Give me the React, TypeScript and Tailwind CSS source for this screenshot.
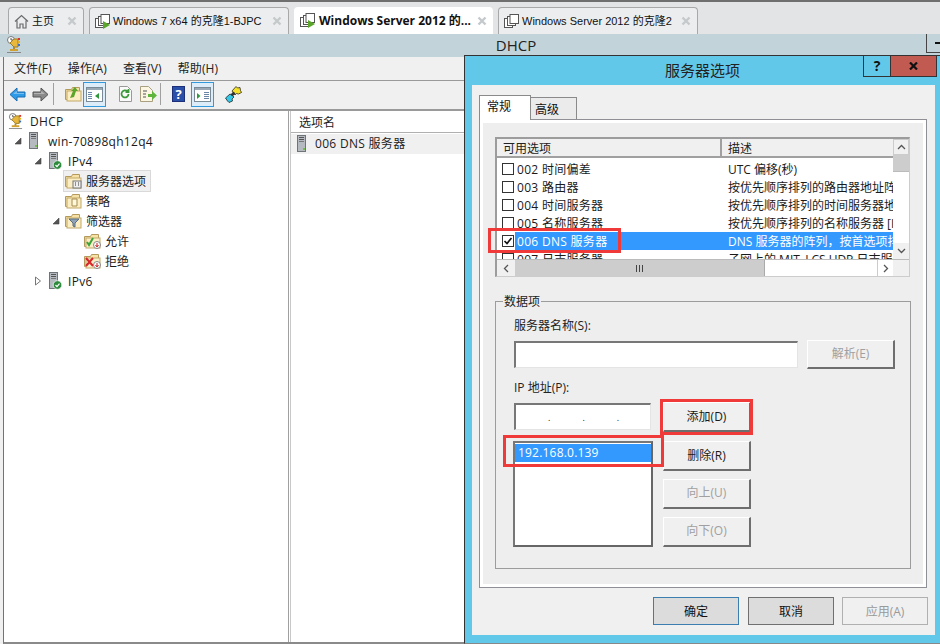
import React from "react";

const F = "font-['Open_Sans','Noto_Sans_CJK_SC',sans-serif]";

function Arrow({ dir, fill, stroke }: { dir: "l" | "r"; fill: string; stroke: string }) {
  return (
    <svg width="17" height="17" viewBox="0 0 17 17" className={dir === "r" ? "scale-x-[-1]" : ""}>
      <path d="M1 8.5 8 2v4h8v5H8v4z" fill={fill} stroke={stroke} strokeWidth="1" />
      <path d="M4 8 8 4.5V7h7v1z" fill="#fff" opacity=".35" />
    </svg>
  );
}

function PaneIcon({ right }: { right?: boolean }) {
  return (
    <div className="w-[23px] h-[25px] border border-[#3399dd] bg-[#dcecf8] flex items-center justify-center">
      <svg width="17" height="15" viewBox="0 0 17 15">
        <rect x=".5" y=".5" width="16" height="14" fill="#fff" stroke="#7a8a96" />
        <rect x="1" y="1" width="15" height="2" fill="#9aa8b4" />
        {right ? (
          <>
            <path d="M3 6v6l3.5-3z" fill="#2f9a3c" />
            <path d="M10 5.5h5M10 7.5h5M10 9.5h5M10 11.5h5" stroke="#6a87a8" />
          </>
        ) : (
          <>
            <path d="M2 5.5h4M2 7.5h4M2 9.5h4M2 11.5h4" stroke="#6a87a8" />
            <path d="M13 6v6l-4-3z" fill="#2f9a3c" />
          </>
        )}
      </svg>
    </div>
  );
}

function Folder({ children }: { children?: React.ReactNode }) {
  return (
    <svg width="18" height="16" viewBox="0 0 18 16" className="shrink-0">
      <path d="M.5 3.5h6l1-2h7v12H.5z" fill="#f6e2a6" stroke="#b49a5c" />
      <rect x="2" y="5" width="14" height="10" fill="#fbeec4" stroke="#c2a868" />
      {children}
    </svg>
  );
}

function Trophy({ size = 16 }: { size?: number }) {
  return (
    <svg width={size} height={size + 2} viewBox="0 0 16 18" className="shrink-0">
      <circle cx="5" cy="4" r="3.5" fill="#fff" stroke="#777" />
      <path d="M5 2v2h2" stroke="#555" fill="none" />
      <path d="M4 7 8 3h4v8H8z" fill="#e8b83c" stroke="#a07c20" />
      <rect x="12" y="2" width="2" height="2" fill="#d33" />
      <rect x="12" y="5" width="2" height="2" fill="#e8b020" />
      <rect x="12" y="8" width="2" height="2" fill="#3a6fd0" />
      <rect x="7" y="11" width="2" height="3" fill="#b08a2a" />
      <rect x="4" y="13" width="8" height="2" fill="#d0a030" />
      <path d="M1 16.5h14" stroke="#888" />
    </svg>
  );
}

function Server({ check }: { check?: boolean }) {
  return (
    <svg width="13" height="18" viewBox="0 0 13 18" className="shrink-0">
      <rect x=".5" y=".5" width="8" height="16" fill="#b4babf" stroke="#6e7478" />
      <rect x="2" y="2" width="5" height="1" fill="#555" />
      <rect x="2" y="4" width="5" height="1" fill="#555" />
      <rect x="2" y="6" width="5" height="1" fill="#777" />
      <rect x="6" y="13" width="2" height="2" fill="#6fbf4a" />
      {check && (
        <>
          <circle cx="8.5" cy="13" r="4.3" fill="#2e8b3c" stroke="#fff" strokeWidth=".7" />
          <path d="M6.5 13l1.5 1.6 2.5-3" stroke="#fff" fill="none" strokeWidth="1.2" />
        </>
      )}
    </svg>
  );
}

function Expander({ open }: { open?: boolean }) {
  return open ? (
    <svg width="8" height="8" viewBox="0 0 8 8" className="shrink-0">
      <path d="M7 1v6H1z" fill="#555" stroke="#444" strokeWidth=".6" />
    </svg>
  ) : (
    <svg width="8" height="10" viewBox="0 0 8 10" className="shrink-0">
      <path d="M1.5 1v8l5-4z" fill="#fff" stroke="#777" />
    </svg>
  );
}

function TreeRow({
  indent,
  icon,
  label,
  exp,
  selected,
  latin,
  root,
}: {
  indent: string;
  icon: React.ReactNode;
  label: string;
  exp?: "o" | "c";
  selected?: boolean;
  latin?: boolean;
  root?: boolean;
}) {
  return (
    <div className={`h-5 flex items-center text-[12px] text-[#1a1a1a] ${indent}`}>
      {!root && (
        <div className="w-[12px] flex justify-start shrink-0">
          {exp === "o" && <Expander open />}
          {exp === "c" && <Expander />}
        </div>
      )}
      <div className={`flex items-center h-5 ${selected ? "bg-[#f0f0f0] outline outline-[#d9d9d9] pr-[4px]" : ""}`}>
        <div className="w-[19px] flex justify-center shrink-0">{icon}</div>
        <span className={`${root ? "ml-[5px]" : "ml-[3px]"} pt-px whitespace-nowrap leading-5 ${latin ? "tracking-[0.3px]" : ""}`}>
          {label}
        </span>
      </div>
    </div>
  );
}

function Tab({
  w,
  active,
  icon,
  label,
  bold,
}: {
  w: string;
  active?: boolean;
  icon: React.ReactNode;
  label: string;
  bold?: boolean;
}) {
  return (
    <div
      className={`${w} h-[27px] flex items-center rounded-t-[4px] ${
        active ? "bg-white pl-[6px]" : "bg-[#ebedef] border border-b-0 border-[#a8a8a8] pl-[5px]"
      }`}
    >
      {icon}
      <span
        className={`whitespace-nowrap text-[#111] ${
          bold ? "text-[12px] font-bold ml-[4px]" : "text-[11px] ml-[3px] font-['Liberation_Sans','Noto_Sans_CJK_SC',sans-serif]"
        }`}
      >
        {label}
      </span>
      <svg width="10" height="10" viewBox="0 0 10 10" className="ml-auto mr-[6px] shrink-0">
        <path d="M1.5 1.5l7 7M8.5 1.5l-7 7" stroke="#c6c9cc" strokeWidth="2.4" />
      </svg>
    </div>
  );
}

function VmIcon({ play = true }: { play?: boolean }) {
  return (
    <svg width="15" height="15" viewBox="0 0 15 15" className="shrink-0">
      <rect x=".5" y="4.5" width="8" height="9" fill="#fff" stroke="#555" />
      <rect x="3.5" y="2.5" width="8" height="9" fill="#fff" stroke="#555" />
      <rect x="6" y=".5" width="8.5" height="9" fill="#fff" stroke="#555" />
      {play && <path d="M8 7v8l7-4z" fill="#5aa52a" />}
    </svg>
  );
}

function Check({ on }: { on?: boolean }) {
  return (
    <div className="w-[12px] h-[12px] border border-[#333] bg-white flex items-center justify-center shrink-0">
      {on && (
        <svg width="10" height="10" viewBox="0 0 10 10">
          <path d="M1.5 5 4 7.5 8.5 2" stroke="#111" strokeWidth="1.7" fill="none" />
        </svg>
      )}
    </div>
  );
}

function ListRow({ n, desc, on, sel }: { n: string; desc: string; on?: boolean; sel?: boolean }) {
  return (
    <div className="h-[18px] flex items-center text-[12px] leading-[18px] whitespace-nowrap shrink-0">
      <div className="w-[18px] pl-[5px] shrink-0 flex">
        <Check on={on} />
      </div>
      <div className={`flex-1 flex h-[18px] pt-px ${sel ? "bg-[#3399ff] text-white" : "text-[#1a1a1a]"}`}>
        <div className="w-[208px] pl-[2px] shrink-0 tracking-[0.3px]">{n}</div>
        <div className="pl-[5px] overflow-hidden w-[170px]">{desc}</div>
      </div>
    </div>
  );
}

function Btn({
  label,
  disabled,
  w = "w-[88px]",
  h = "h-[30px]",
  extra = "",
}: {
  label: string;
  disabled?: boolean;
  w?: string;
  h?: string;
  extra?: string;
}) {
  return (
    <div
      className={`${w} ${h} ${extra} shrink-0 flex items-center justify-center text-[12px] bg-[#f0f0f0] border-t border-l border-t-white border-l-white border-r-2 border-b-2 border-r-[#6e6e6e] border-b-[#6e6e6e] ${
        disabled ? "text-[#a0a0a0]" : "text-[#1a1a1a]"
      }`}
    >
      {label}
    </div>
  );
}

function FootBtn({ label, cls }: { label: string; cls: string }) {
  return <div className={`w-[86px] h-[28px] pt-px flex items-center justify-center text-[12px] border ${cls}`}>{label}</div>;
}

function Sunken({ cls, children }: { cls: string; children?: React.ReactNode }) {
  return (
    <div className={`${cls} bg-white border-t-2 border-l-2 border-t-[#777] border-l-[#777] border-r border-b border-r-[#e4e4e4] border-b-[#e4e4e4]`}>
      {children}
    </div>
  );
}

export default function App() {
  return (
    <div className={`relative w-[940px] h-[644px] overflow-hidden bg-[#f0f0f0] flex flex-col ${F}`}>
      {/* browser tab strip */}
      <div className="h-[34px] shrink-0 bg-[#e3e4e6] border-t-2 border-[#6f6f6f] flex items-end pl-[8px] gap-[5px]">
        <Tab
          w="w-[76px]"
          bold={false}
          label="主页"
          icon={
            <svg width="15" height="15" viewBox="0 0 15 15" className="shrink-0">
              <path d="M1 7.5 7.5 1.5 14 7.5M3 6.5V14h3v-4h3v4h3V6.5" fill="none" stroke="#6a6a6a" strokeWidth="1.2" />
            </svg>
          }
        />
        <Tab w="w-[200px]" label="Windows 7 x64 的克隆1-BJPC" icon={<VmIcon />} />
        <Tab w="w-[199px]" active bold label="Windows Server 2012 的..." icon={<VmIcon />} />
        <Tab w="w-[200px]" label="Windows Server 2012 的克隆2" icon={<VmIcon play={false} />} />
      </div>

      {/* MMC window */}
      <div className="flex-1 min-h-0 flex flex-col ml-[3px] border-l border-b-2 border-l-[#6f7478] border-b-[#8a8a8a]">
        <div className="h-[23px] shrink-0 -ml-[4px] bg-[#c2d4da] flex items-center justify-center text-[15px] text-[#222] relative pl-[92px]">
          <div className="absolute left-[6px] top-[2px]">
            <Trophy />
          </div>
          <span>DHCP</span>
          <div className="absolute right-0 top-0 w-[14px] h-[19px] border-l border-b border-[#444] flex items-center pl-[8px]">
            <i className="w-[6px] h-[2px] bg-[#111]" />
          </div>
        </div>
        <div className="h-[24px] shrink-0 flex items-center text-[12px] text-[#222] pl-[10px] pt-px gap-[16px] bg-[#f0f0f0] border-b border-[#9a9a9a] tracking-[0.1px]">
          <span>文件(F)</span>
          <span>操作(A)</span>
          <span>查看(V)</span>
          <span>帮助(H)</span>
        </div>
        <div className="h-[30px] shrink-0 flex items-center pl-[5px] pb-[2px] bg-[#f0f0f0] border-b-2 border-[#9a9a9a]">
          <Arrow dir="l" fill="#2d9be8" stroke="#1c6cb0" />
          <div className="w-[6px]" />
          <Arrow dir="r" fill="#8a8a8a" stroke="#555" />
          <div className="w-[4px]" />
          <div className="w-px h-[22px] bg-[#a0a0a0]" />
          <div className="w-[11px]" />
          <Folder>
            <path d="M5 12 8 5l-2 0 4-4 3 4h-2l-2 6z" fill="#5aa52a" />
          </Folder>
          <PaneIcon />
          <div className="w-[13px]" />
          <svg width="13" height="16" viewBox="0 0 13 16">
            <path d="M.5.5h8l4 4v11H.5z" fill="#fafafa" stroke="#999" />
            <path d="M9.5 8a3.5 3.5 0 1 1-1-2.5M9.5 3v3h-3" stroke="#3c9a3c" strokeWidth="1.8" fill="none" />
          </svg>
          <div className="w-[8px]" />
          <svg width="17" height="16" viewBox="0 0 17 16">
            <path d="M.5.5h8l4 4v11H.5z" fill="#faf6e2" stroke="#a8a080" />
            <path d="M3 5h4M3 8h3M3 11h3" stroke="#555" />
            <path d="M8 8h4V5l5 4.5-5 4.5v-3H8z" fill="#5fb53c" />
          </svg>
          <div className="w-[3px]" />
          <div className="w-px h-[22px] bg-[#a0a0a0]" />
          <div className="w-[11px]" />
          <div className="w-[13px] h-[16px] bg-[#2a4fa8] text-white text-[13px] font-bold flex items-center justify-center leading-none border border-[#1c2f78]">?</div>
          <div className="w-[6px]" />
          <PaneIcon right />
          <div className="w-[11px]" />
          <svg width="17" height="17" viewBox="0 0 17 17">
            <path d="M.5 12 5 8l2.5 1.5L9 11l-2 2 .5 2L4 16.5 2.5 15z" fill="#33c8e8" stroke="#111" strokeWidth=".7" />
            <path d="M7 5l4-4.5 1.5 1.5L15 1.500l.5 3 1 2-3 1.500-2-.5-1.500 1.500z" fill="#f4e02a" stroke="#111" strokeWidth=".7" />
            <path d="M5.500 8.500l3-3 2 2-3 3z" fill="#333" />
          </svg>
        </div>

        <div className="flex-1 min-h-0 flex bg-white">
          <div className="w-[285px] shrink-0 pl-[1px] border-r border-[#a0a0a0]">
            <TreeRow root latin indent="pl-[1px]" icon={<Trophy size={15} />} label="DHCP" />
            <TreeRow latin indent="pl-[9px]" exp="o" icon={<Server />} label="win-70898qh12q4" />
            <TreeRow latin indent="pl-[29px]" exp="o" icon={<Server check />} label="IPv4" />
            <TreeRow
              indent="pl-[47px]"
              selected
              icon={
                <Folder>
                  <rect x="8" y="8" width="8" height="7" fill="#eee" stroke="#777" />
                  <path d="M10 10h1M13 10h1M10 12h1M13 12h1" stroke="#333" />
                </Folder>
              }
              label="服务器选项"
            />
            <TreeRow
              indent="pl-[47px]"
              icon={
                <Folder>
                  <path d="M7 6h5v7H7z" fill="#fff8dc" stroke="#a58b4f" />
                </Folder>
              }
              label="策略"
            />
            <TreeRow
              indent="pl-[47px]"
              exp="o"
              icon={
                <Folder>
                  <path d="M4 6h10l-4 4v4l-2-1v-3z" fill="#8fa3b8" stroke="#5a6c80" />
                </Folder>
              }
              label="筛选器"
            />
            <TreeRow
              indent="pl-[66px]"
              icon={
                <Folder>
                  <path d="M3 9l2 3 4-7" stroke="#3aa53a" strokeWidth="2" fill="none" />
                  <circle cx="13" cy="12" r="3.5" fill="#fff" stroke="#888" />
                  <path d="M13 10v3M11.5 12l1.500 2 1.500-2" stroke="#c22" fill="none" />
                </Folder>
              }
              label="允许"
            />
            <TreeRow
              indent="pl-[66px]"
              icon={
                <Folder>
                  <path d="M2 5l7 8M9 5l-7 8" stroke="#d8262c" strokeWidth="2" />
                  <circle cx="13" cy="12" r="3.5" fill="#fff" stroke="#888" />
                  <path d="M13 10v3M11.5 12l1.500 2 1.500-2" stroke="#c22" fill="none" />
                </Folder>
              }
              label="拒绝"
            />
            <TreeRow latin indent="pl-[29px]" exp="c" icon={<Server check />} label="IPv6" />
          </div>
          <div className="flex-1 border-l border-[#c8c8c8] ml-[1px]">
            <div className="h-[22px] flex items-center pl-[8px] pt-[3px] text-[12px] text-[#222] border-b border-[#b0b0b0]">选项名</div>
            <div className="mt-[1px] h-5 bg-[#f0f0f0] flex items-center text-[12px] text-[#222] pl-[6px] gap-[5px] tracking-[0.3px]">
              <Server />
              <span>006 DNS 服务器</span>
            </div>
          </div>
        </div>
      </div>

      {/* Dialog window */}
      <div className="absolute left-[464px] top-[55px] w-[476px] h-[589px] bg-[#62c8ea] border-t border-l border-b border-t-[#333] border-l-[#333] border-b-[#888] flex flex-col pl-[7px]">
        <div className="h-[29px] shrink-0 relative flex items-center justify-center text-[15px] text-[#222] -ml-[7px]">
          服务器选项
          <div className="absolute right-[3px] top-0 flex h-[21px]">
            <div className="w-[28px] border border-t-0 border-[#333] flex items-center justify-center text-[14px] font-bold text-[#111] leading-none">?</div>
            <div className="w-[46px] bg-[#c15b52] border border-t-0 border-l-0 border-[#333] flex items-center justify-center">
              <svg width="9" height="8" viewBox="0 0 9 8">
                <path d="M1 .5l7 7M8 .5l-7 7" stroke="#111" strokeWidth="2.2" />
              </svg>
            </div>
          </div>
        </div>
        <div className="w-[463px] h-[550px] bg-[#f0f0f0] flex flex-col px-[7px] pt-[10px]">
          {/* tabs */}
          <div className="flex items-end h-[24px] shrink-0 relative z-10">
            <div className="w-[52px] h-[25px] -mb-[1px] bg-[#fff] border border-b-0 border-[#8a8a8a] text-[12px] text-[#111] pl-[7px] pt-[2px]">常规</div>
            <div className="w-[46px] h-[22px] bg-[#ebebeb] border border-l-0 border-b-0 border-[#8a8a8a] text-[12px] text-[#111] pl-[4px] pt-[3px]">高级</div>
          </div>
          <div className="w-[448px] h-[469px] shrink-0 border border-[#8f8f96] bg-[#eeeeee] pl-[15px] pt-[17px] shadow-[inset_0_0_0_3px_#fff]">
            {/* options list */}
            <div className="w-[415px] h-[140px] border-t-2 border-l-2 border-r border-b border-t-[#9c9c9c] border-l-[#9c9c9c] border-r-[#ccc] border-b-[#ccc] bg-white flex flex-col">
              <div className="flex-1 min-h-0 flex">
                <div className="w-[396px] flex flex-col overflow-hidden">
                  <div className="h-[19px] shrink-0 flex items-center text-[12px] text-[#222] bg-[#f0f0f0] border-b-2 border-[#a0a0a0]">
                    <div className="w-[225px] pl-[6px] pt-[2px] border-r-2 border-[#a0a0a0] h-full flex items-center">可用选项</div>
                    <div className="pl-[6px] pt-[2px]">描述</div>
                  </div>
                  <div className="h-[2px] shrink-0" />
                  <ListRow n="002 时间偏差" desc="UTC 偏移(秒)" />
                  <ListRow n="003 路由器" desc="按优先顺序排列的路由器地址阵列" />
                  <ListRow n="004 时间服务器" desc="按优先顺序排列的时间服务器地址" />
                  <ListRow n="005 名称服务器" desc="按优先顺序排列的名称服务器 [IEN]" />
                  <ListRow n="006 DNS 服务器" desc="DNS 服务器的阵列，按首选项排列" on sel />
                  <ListRow n="007 日志服务器" desc="子网上的 MIT_LCS UDP 日志服务" />
                </div>
                <div className="w-[16px] shrink-0 flex flex-col bg-white text-[#555]">
                  <div className="h-[16px] bg-[#f0f0f0] border border-[#ccc] flex items-center justify-center">
                    <svg width="9" height="6" viewBox="0 0 9 6"><path d="M1 5 4.500 1.500 8 5" fill="none" stroke="#555" strokeWidth="1.3" /></svg>
                  </div>
                  <div className="h-[17px] bg-[#cdcdcd] border-b border-[#bbb]" />
                  <div className="flex-1" />
                  <div className="h-[16px] bg-[#f0f0f0] flex items-center justify-center">
                    <svg width="9" height="6" viewBox="0 0 9 6"><path d="M1 1 4.500 4.500 8 1" fill="none" stroke="#555" strokeWidth="1.3" /></svg>
                  </div>
                </div>
              </div>
              <div className="h-[17px] shrink-0 flex bg-[#f0f0f0] border-t border-[#bbb]">
                <div className="w-[18px] flex items-center justify-center">
                  <svg width="6" height="9" viewBox="0 0 6 9"><path d="M5 1 1.500 4.500 5 8" fill="none" stroke="#555" strokeWidth="1.3" /></svg>
                </div>
                <div className="w-[250px] bg-[#cdcdcd] border-r border-[#aaa] flex items-center justify-center gap-px">
                  <i className="w-px h-[7px] bg-[#444]" />
                  <i className="ml-px w-px h-[7px] bg-[#444]" />
                  <i className="ml-px w-px h-[7px] bg-[#444]" />
                </div>
                <div className="w-[112px] bg-white" />
                <div className="w-[16px] bg-white border-l border-[#ccc] flex items-center justify-center">
                  <svg width="6" height="9" viewBox="0 0 6 9"><path d="M1 1 4.500 4.500 1 8" fill="none" stroke="#555" strokeWidth="1.3" /></svg>
                </div>
              </div>
            </div>
            {/* group */}
            <div className="mt-[24px] w-[416px] h-[268px] border border-[#9c9c9c] relative pl-[18px]">
              <div className="absolute left-[7px] -top-[9px] bg-[#eee] px-[1px] text-[12px] leading-[17px] text-[#222]">数据项</div>
              <div className="pt-[15px] text-[12px] leading-[17px] text-[#222]">服务器名称(S):</div>
              <div className="mt-[7px] flex items-start gap-[9px]">
                <Sunken cls="w-[284px] h-[27px]" />
                <div className="-mt-px"><Btn label="解析(E)" disabled h="h-[29px]" /></div>
              </div>
              <div className="mt-[10px] text-[12px] leading-[17px] text-[#222]">IP 地址(P):</div>
              <div className="mt-[7px] flex">
                <div className="flex flex-col">
                  <Sunken cls="w-[137px] h-[27px] flex items-center pl-[32px] gap-[32px] text-[9px] text-[#222]">
                    <span className="leading-none">.</span>
                    <span className="leading-none">.</span>
                    <span className="leading-none">.</span>
                  </Sunken>
                  <div className="-ml-px mt-[11px] w-[140px] h-[106px] bg-white border-2 border-[#777] border-b-[#666] border-r-[#666] pt-[1px] text-[12px]">
                    <div className="h-[18px] bg-[#3399ff] text-white pl-[3px] leading-[17px] tracking-[0.2px]">192.168.0.139</div>
                  </div>
                </div>
                <div className="ml-[10px] -mt-px flex flex-col gap-[8px]">
                  <Btn label="添加(D)" extra="mb-px" />
                  <Btn label="删除(R)" />
                  <Btn label="向上(U)" disabled extra="pb-[2px]" />
                  <Btn label="向下(O)" disabled extra="pb-[2px]" />
                </div>
              </div>
            </div>
          </div>
          <div className="mt-[9px] flex justify-end gap-[8px]">
            <FootBtn label="确定" cls="bg-[#dcdcdc] border-[#3d7eb0] text-[#111] mr-px" />
            <FootBtn label="取消" cls="bg-[#dcdcdc] border-[#707070] text-[#111]" />
            <FootBtn label="应用(A)" cls="bg-[#f0f0f0] border-[#b0b0b0] text-[#999]" />
          </div>
        </div>
      </div>

      {/* red annotation boxes */}
      <div className="absolute left-[488px] top-[228px] w-[133px] h-[25px] border-[3px] border-[#f03a3a]" />
      <div className="absolute left-[660px] top-[399px] w-[93px] h-[36px] border-[3px] border-[#f03a3a]" />
      <div className="absolute left-[503px] top-[435px] w-[161px] h-[32px] border-[3px] border-[#f03a3a]" />
    </div>
  );
}
